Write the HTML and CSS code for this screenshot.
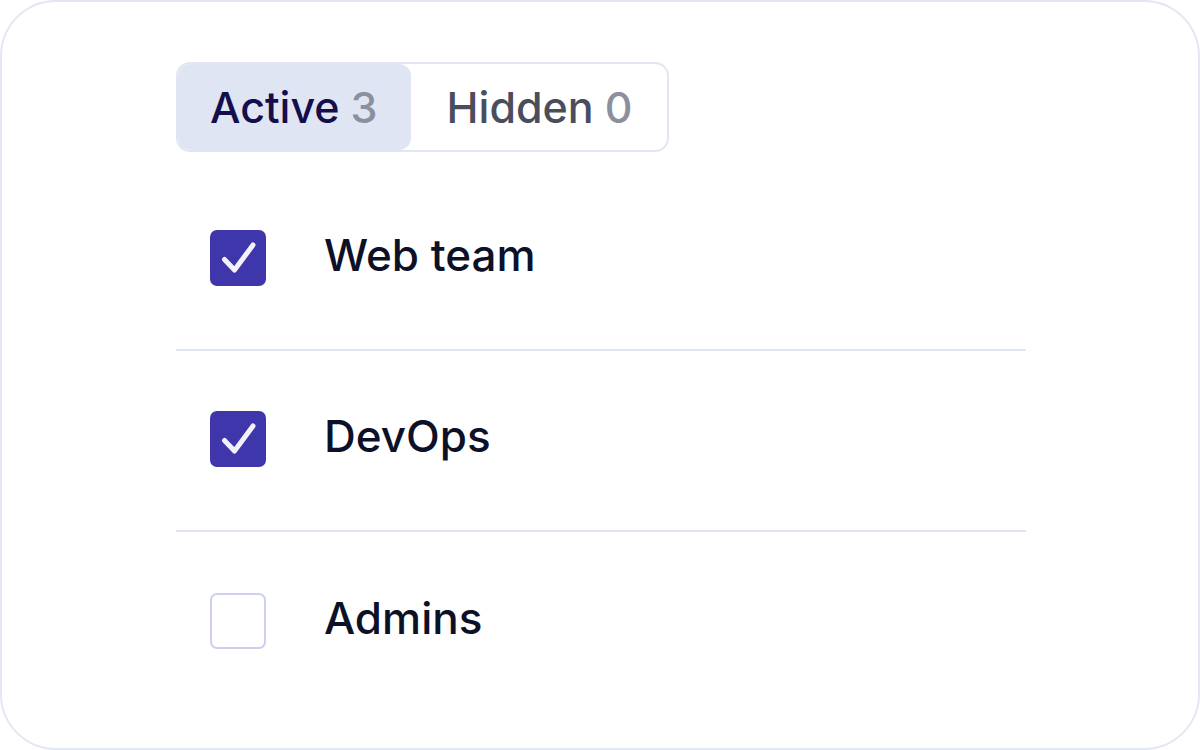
FILE: index.html
```html
<!DOCTYPE html>
<html lang="en">
<head>
<meta charset="utf-8">
<title>Groups</title>
<link rel="stylesheet" href="styles.css">
</head>
<body>
<div class="card">
  <div class="tabs">
    <div class="tab tab-active"><span class="tab-name">Active</span><span class="count">3</span></div>
    <div class="tab"><span class="tab-name">Hidden</span><span class="count">0</span></div>
  </div>
  <ul class="list">
    <li class="row">
      <span class="box checked">
        <svg viewBox="0 0 56 56" width="56" height="56"><path d="M14.5 29.5 L24.5 40 L43 15" fill="none" stroke="#f3f2fb" stroke-width="5" stroke-linecap="round" stroke-linejoin="round"/></svg>
      </span>
      <span class="label">Web team</span>
    </li>
    <li class="row">
      <span class="box checked">
        <svg viewBox="0 0 56 56" width="56" height="56"><path d="M14.5 29.5 L24.5 40 L43 15" fill="none" stroke="#f3f2fb" stroke-width="5" stroke-linecap="round" stroke-linejoin="round"/></svg>
      </span>
      <span class="label">DevOps</span>
    </li>
    <li class="row">
      <span class="box"></span>
      <span class="label">Admins</span>
    </li>
  </ul>
</div>
</body>
</html>
```

FILE: styles.css
```css
* { box-sizing: border-box; }

html, body {
  margin: 0;
  padding: 0;
  background: #ffffff;
}

body {
  font-family: Inter, "Noto Sans", sans-serif;
}

.card {
  width: 1200px;
  height: 750px;
  border: 2px solid #e3e6f3;
  border-radius: 56px;
  background: #ffffff;
  padding: 60px 0 0 174px;
}

.tabs {
  display: inline-flex;
  border: 2px solid #e2e6f3;
  border-radius: 14px;
  height: 90px;
  overflow: hidden;
}

.tab {
  display: flex;
  align-items: center;
  padding: 0 35px 0 36px;
  font-size: 43px;
  font-weight: 500;
  color: #4a4d5c;
}

.tab-active {
  background: #e0e5f3;
  color: #140f4c;
  border-radius: 12px;
  padding: 0 33px 0 32px;
}

.count {
  color: #8c909d;
  margin-left: 11px;
}

.list {
  list-style: none;
  margin: 18px 0 0;
  padding: 0;
  width: 850px;
}

.row {
  display: flex;
  align-items: center;
  padding: 60px 0 63px 34px;
  border-bottom: 2px solid #e0e5f4;
}

.row:last-child {
  border-bottom: none;
  padding-top: 61px;
}

.box {
  width: 56px;
  height: 56px;
  flex: none;
  border-radius: 7px;
  border: 2px solid #cdd0ec;
  background: #ffffff;
}

.box.checked {
  border: none;
  background: #3f36ab;
}

.box svg {
  display: block;
}

.label {
  margin-left: 58px;
  font-size: 44px;
  font-weight: 500;
  color: #0c1128;
  line-height: 56px;
  margin-top: -6px;
}
```
